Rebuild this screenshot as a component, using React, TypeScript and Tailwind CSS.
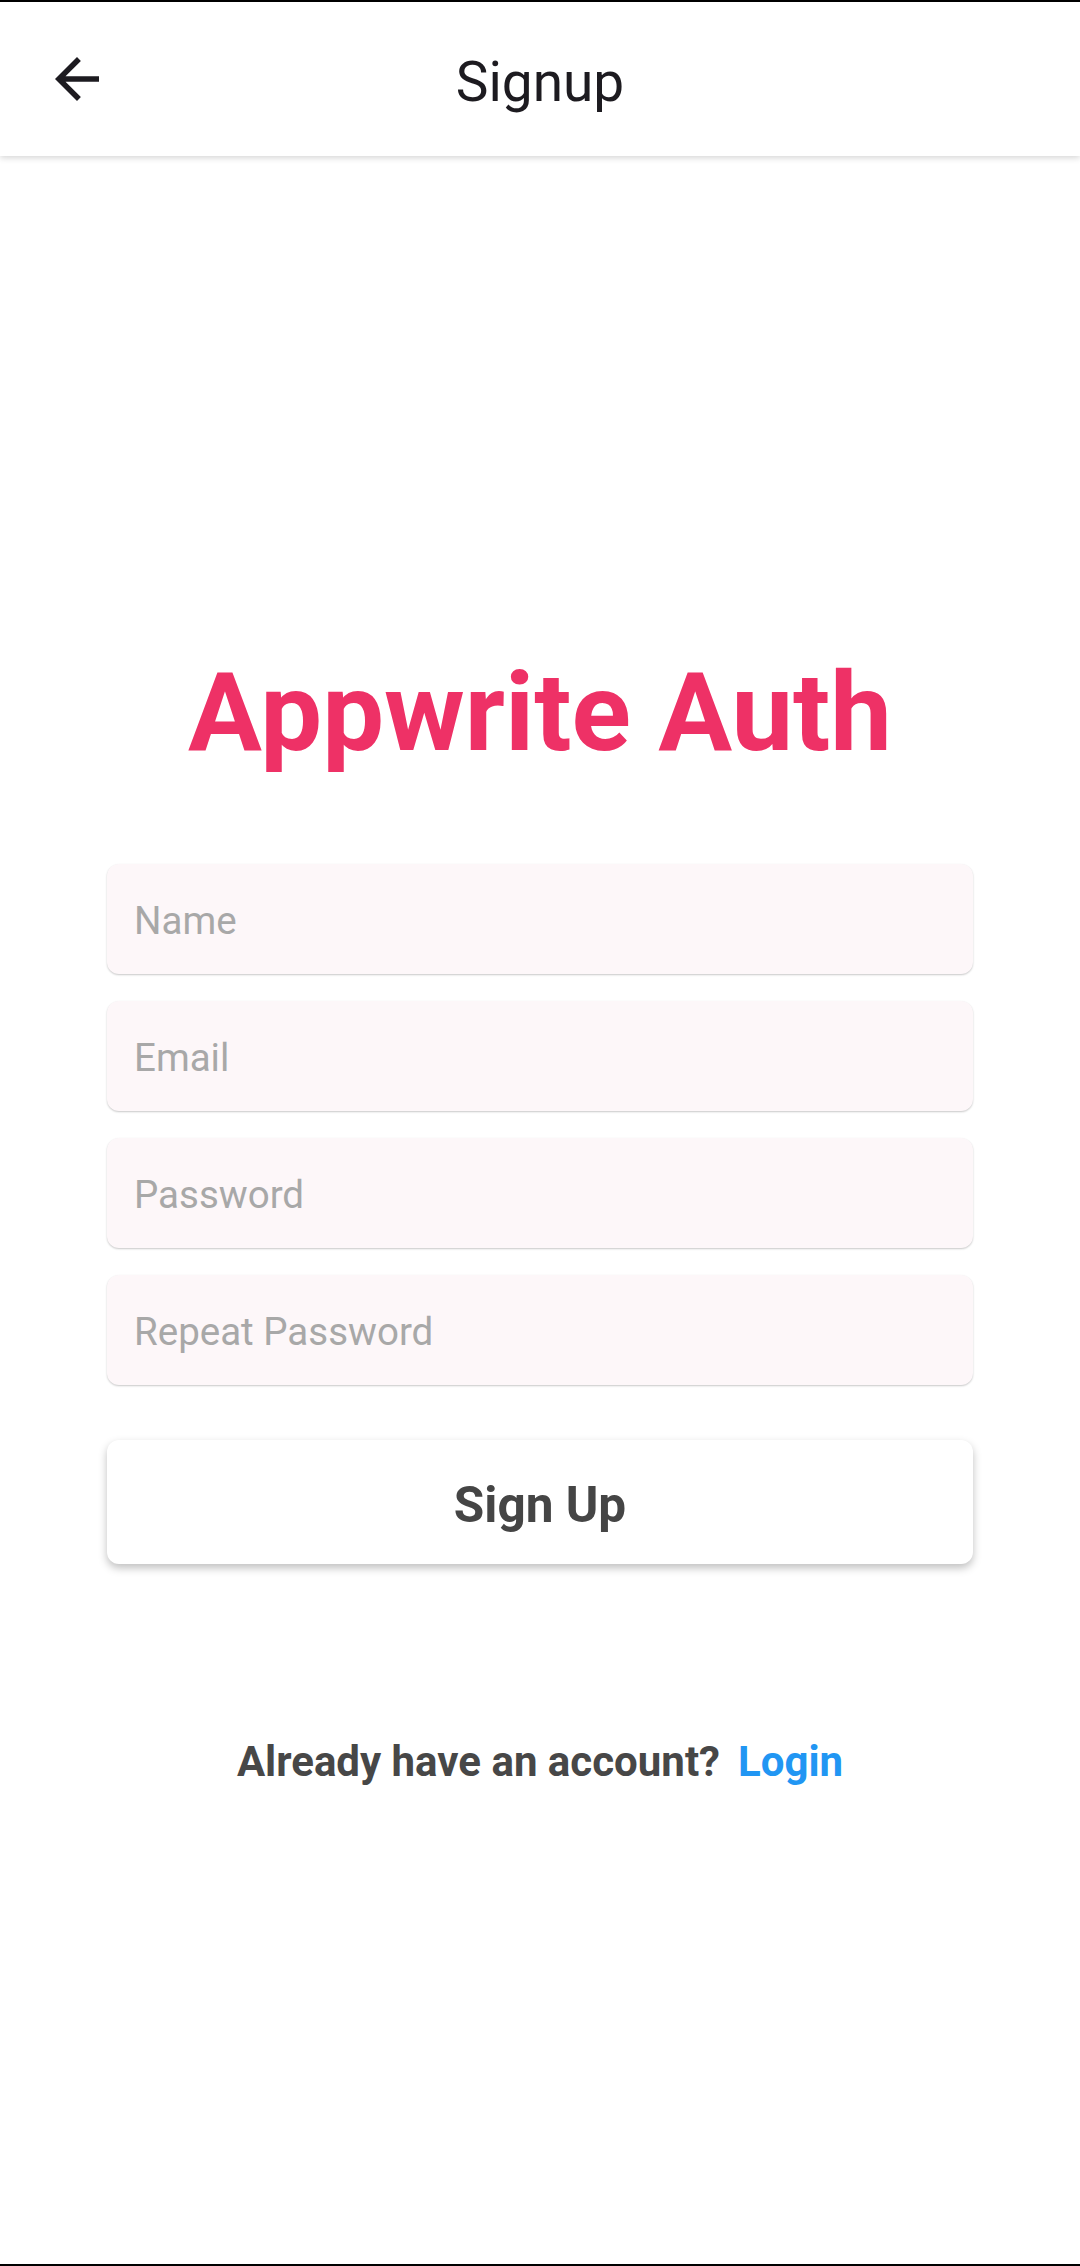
import React from "react";

function Field({ placeholder }: { placeholder: string }) {
  return (
    <div className="h-[110px] w-full rounded-[12px] bg-[#FDF7F9] shadow-[0_1px_2px_rgba(0,0,0,0.22)] flex items-center pl-[27px] pt-[4px]">
      <span className="text-[38.5px] leading-none text-[#A8A8A8]">{placeholder}</span>
    </div>
  );
}

export default function App() {
  return (
    <div
      className="w-[1080px] h-[2266px] bg-white border-t-2 border-b-2 border-black flex flex-col overflow-hidden"
      style={{ fontFamily: "Roboto, 'Noto Sans', sans-serif" }}
    >
      <header className="h-[154px] shrink-0 bg-white shadow-[0_2px_6px_rgba(0,0,0,0.16)] grid grid-cols-[1fr_auto_1fr] items-center relative z-10">
        <div className="flex items-center pl-[44px]">
          <svg width="66" height="66" viewBox="0 0 24 24" fill="#1D1B20">
            <path d="M20 11H7.83l5.59-5.59L12 4l-8 8 8 8 1.41-1.41L7.83 13H20v-2z" />
          </svg>
        </div>
        <div className="text-[55px] text-[#1D1B20] leading-none pt-[6px]">Signup</div>
        <div />
      </header>

      <main className="flex flex-col items-center">
        <h1 className="mt-[502px] text-[110px] leading-none font-bold text-[#EE3166]">
          Appwrite Auth
        </h1>
        <div className="mt-[96px] w-full px-[107px] flex flex-col gap-[27px]">
          <Field placeholder="Name" />
          <Field placeholder="Email" />
          <Field placeholder="Password" />
          <Field placeholder="Repeat Password" />
        </div>
        <div className="mt-[55px] w-full px-[107px]">
          <button className="h-[124px] w-full rounded-[12px] bg-white shadow-[0_4px_9px_rgba(0,0,0,0.25)] flex items-center justify-center pt-[7px]">
            <span className="text-[49.5px] leading-none font-bold text-[#454545]">Sign Up</span>
          </button>
        </div>
        <div className="mt-[177px] flex items-center gap-[18px]">
          <span className="text-[42px] leading-none font-bold text-[#474747]">Already have an account?</span>
          <span className="text-[42px] leading-none font-bold text-[#2196F3]">Login</span>
        </div>
      </main>
    </div>
  );
}
